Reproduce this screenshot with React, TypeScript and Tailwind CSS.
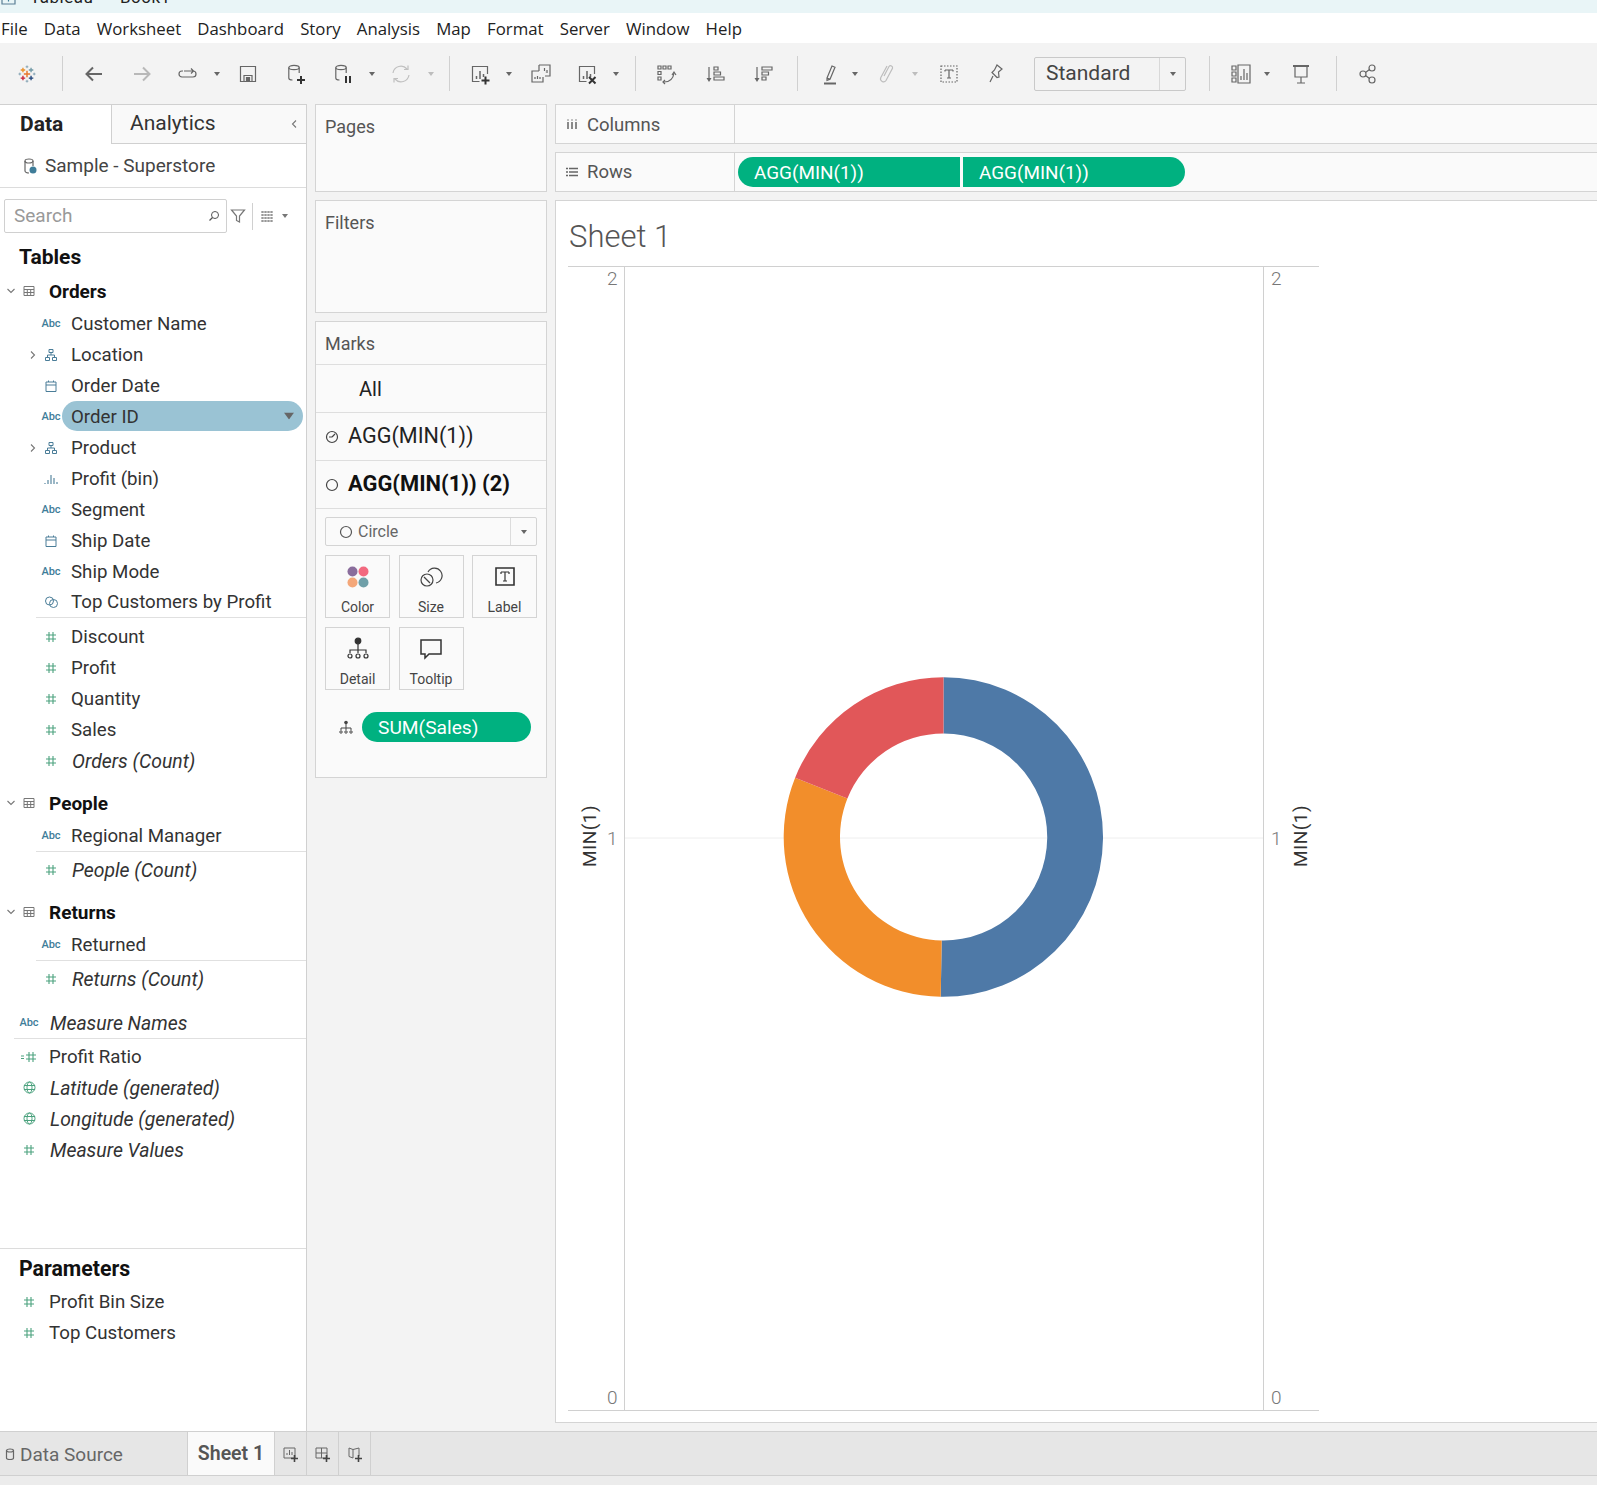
import React from "react";

const S = ({ children, w = 24, h = 24, className = "" }: { children: React.ReactNode; w?: number; h?: number; className?: string }) => (
  <svg width={w} height={h} viewBox={`0 0 ${w} ${h}`} fill="none" stroke="currentColor" strokeWidth="1.2" className={"shrink-0 " + className}>
    {children}
  </svg>
);

const Caret = ({ className = "" }: { className?: string }) => (
  <svg width="6" height="4" viewBox="0 0 6 4" className={"shrink-0 " + className}><path d="M0 0h6L3 4z" fill="currentColor" /></svg>
);

const Plus = ({ x, y }: { x: number; y: number }) => (
  <path d={`M${x - 4} ${y}h8M${x} ${y - 4}v8`} strokeWidth="2" stroke="#333" />
);

const Cyl = () => (
  <>
    <ellipse cx="10" cy="5.5" rx="5.2" ry="2.2" />
    <path d="M4.8 5.5V16c0 1.300 1.500 2 3.700 2M15.200 5.500V11" />
  </>
);

const Chart = () => (
  <>
    <path d="M19.500 12V4.500h-15v15h7" />
    <path d="M8.500 17v-3M12 17V9M15.500 15v-3" strokeWidth="1.500" />
  </>
);

const Logo = () => (
  <svg width="18" height="18" viewBox="0 0 20 20" strokeWidth="1.500" className="shrink-0">
    <path d="M10 6.500v7M6.500 10h7" stroke="#e8762b" strokeWidth="1.600" />
    <path d="M5.500 3v5M3 5.500h5" stroke="#eb912b" />
    <path d="M14.500 3v5M12 5.500h5" stroke="#7099a6" />
    <path d="M5.500 12v5M3 14.500h5" stroke="#c72037" />
    <path d="M14.500 12v5M12 14.500h5" stroke="#1f447a" />
    <path d="M10 .5v3M8.500 2h3M10 16.500v3M8.500 18h3M2 8.500v3M.5 10h3M18 8.500v3M16.500 10h3" stroke="#7f9fb0" strokeWidth="1" />
  </svg>
);

const Slot = ({ className, children }: { className: string; children?: React.ReactNode }) => (
  <div className={"flex items-center justify-center shrink-0 h-full " + className}>{children}</div>
);

const Sep = ({ className }: { className: string }) => (
  <Slot className={className}><div className="w-px h-[35px] bg-[#d0d0d0]" /></Slot>
);

const Toolbar = () => (
  <div className="h-[61px] bg-[#f3f3f3] flex items-center text-[#666] shrink-0">
    <Slot className="w-[53px]"><Logo /></Slot>
    <Sep className="w-[18px]" />
    <Slot className="w-[46px]"><S><path d="M5 12h15M11 5.500L4.500 12l6.500 6.500" strokeWidth="2" /></S></Slot>
    <Slot className="w-[50px] text-[#b8b8b8]"><S><path d="M4 12h15M13 5.500l6.500 6.500-6.500 6.500" strokeWidth="2" /></S></Slot>
    <Slot className="w-[42px]"><S><path d="M8 9h9a3 3 0 0 1 0 6H6a3 3 0 0 1 0-6h1M15 6.500L17.500 9 15 11.500" /></S></Slot>
    <Slot className="w-[16px]"><Caret /></Slot>
    <Slot className="w-[46px]"><S><path d="M4.500 4.500h15v15h-15zM8 19.500v-6h8v6" /><path d="M10.500 15.500h3v4h-3z" fill="currentColor" /></S></Slot>
    <Slot className="w-[50px]"><S><Cyl /><Plus x={17} y={18} /></S></Slot>
    <Slot className="w-[44px]"><S><Cyl /><path d="M15 14v7M19 14v7" strokeWidth="2" stroke="#333" /></S></Slot>
    <Slot className="w-[14px]"><Caret /></Slot>
    <Slot className="w-[44px] text-[#c0c0c0]"><S><path d="M4 11a8 8 0 0 1 14-4M20 13a8 8 0 0 1-14 4M15 7.500h4v-4M9 16.500H5v4" /></S></Slot>
    <Slot className="w-[16px] text-[#bdbdbd]"><Caret /></Slot>
    <Sep className="w-[20px]" />
    <Slot className="w-[42px]"><S><Chart /><Plus x={17.500} y={18.500} /></S></Slot>
    <Slot className="w-[16px]"><Caret /></Slot>
    <Slot className="w-[48px]"><S><path d="M10 3h11v11h-5M10 14V3M13 11V9M15.500 11V6M18 11V8" /><path d="M3 9h13v11H3z" fill="#f3f3f3" stroke="none" /><path d="M10 9H3v11h11v-5M6 17v-2M8.500 17v-3M11 17v-2" /></S></Slot>
    <Slot className="w-[44px]"><S><Chart /><path d="M14 15l6.500 6.500M20.500 15L14 21.500" strokeWidth="2" stroke="#333" /></S></Slot>
    <Slot className="w-[14px]"><Caret /></Slot>
    <Sep className="w-[24px]" />
    <Slot className="w-[38px]"><S><path d="M4 4h3v3H4zM9 4h3v3H9zM14 4h3v3h-3zM4 9.500h3v3H4zM4 15h3v3H4zM10 20c5 0 9-2 10-9" /><path d="M18 13l2-3 2 3M11 18l-2 2 2 2" /></S></Slot>
    <Slot className="w-[60px]"><S><path d="M6 5v13" strokeWidth="1.200" /><path d="M3.500 16h5L6 20z" fill="currentColor" stroke="none" /><path d="M11 5h4v3h-4zM11 10h6.500v3H11zM11 15h10v3H11z" /></S></Slot>
    <Slot className="w-[36px]"><S><path d="M6 5v13" strokeWidth="1.200" /><path d="M3.500 16h5L6 20z" fill="currentColor" stroke="none" /><path d="M11 5h10v3H11zM11 10h6.500v3H11zM11 15h4v3h-4z" /></S></Slot>
    <Sep className="w-[32px]" />
    <Slot className="w-[34px]"><S><path d="M9 16l5-12 3 1.300-5 12-3 1zM9 16l3 1.300" /><path d="M6 21.500h12" strokeWidth="2" /></S></Slot>
    <Slot className="w-[16px]"><Caret /></Slot>
    <Slot className="w-[48px] text-[#bdbdbd]"><S><path d="M9 15l5-9.500a2 2 0 0 1 3.500 1.800L11 19.500a3 3 0 0 1-5.300-2.700L12 5" transform="translate(0 -1)" /></S></Slot>
    <Slot className="w-[8px] text-[#bdbdbd]"><Caret /></Slot>
    <Slot className="w-[60px]"><S><path d="M4 4h16v16H4z" strokeDasharray="1.500 1.500" /><path d="M8 8h8M12 8v8M10 16h4M8 8v1.500M16 8v1.500" /></S></Slot>
    <Slot className="w-[32px]"><S><path d="M14 3l5 4-3.500 3 .5 5-2 .5-5-5 2.500-2.500zM10 14l-3 6" /></S></Slot>
    <div className="ml-[23px] w-[152px] h-[34px] border border-[#c9c9c9] rounded-[2px] flex items-center shrink-0">
      <div className="flex-1 pl-[11px] text-[21px] text-[#444] leading-none">Standard</div>
      <div className="w-[26px] h-full border-l border-[#d8d8d8] flex items-center justify-center"><Caret /></div>
    </div>
    <Sep className="ml-[7px] w-[32px]" />
    <Slot className="w-[32px]"><S><path d="M3 4h4v4H3zM3 10h4v4H3zM3 16h4v4H3zM9 3h12v18H9z" /><path d="M12 18v-4M15 18V7M18 18v-7" /></S></Slot>
    <Slot className="w-[20px]"><Caret /></Slot>
    <Slot className="w-[48px]"><S><path d="M4 4h16" strokeWidth="2" /><path d="M6 4v11h12V4M12 15v6M8 21h8" /></S></Slot>
    <Sep className="w-[22px]" />
    <Slot className="w-[42px]"><S><circle cx="16" cy="6" r="3" /><circle cx="7" cy="12" r="3" /><circle cx="16" cy="18" r="3" /><path d="M9.500 10.500L13.500 7.500M9.500 13.500l4 3" /></S></Slot>
  </div>
);

const blue = "text-[#4a7d98]";
const green = "text-[#4ba27e]";

const Abc = () => <span className="text-[11px] font-medium text-[#3f7d99] leading-none">Abc</span>;
const Hier = () => (
  <S w={14} h={14} className={blue}><path d="M5 1.500h4v3H5zM1.500 9.500h4v3h-4zM8.500 9.500h4v3h-4zM7 4.500V7M3.500 9.500V7h7v2.500" strokeWidth="1" /></S>
);
const Cal = () => (
  <S w={14} h={14} className={blue}><path d="M2 3h10v9.500H2zM2 6h10M4.500 1.500V3M9.500 1.500V3" strokeWidth="1" /></S>
);
const Bins = () => (
  <S w={16} h={14} className={blue}><path d="M2 11v1M5 8v4M8 3v9M11 6v6M14 10v2" strokeWidth="1.100" /></S>
);
const Hash = () => (
  <S w={12} h={14} className={green}><path d="M4 2v10M8 2v10M1 5h10M1 9h10" strokeWidth="1.100" /></S>
);
const SetIco = () => (
  <S w={15} h={14} className={blue}><circle cx="5.500" cy="6" r="4" strokeWidth="1" /><circle cx="9.500" cy="8.500" r="4" strokeWidth="1" /></S>
);
const HashCalc = () => (
  <S w={16} h={14} className={green}><path d="M8 2v10M12 2v10M5 5h10M5 9h10M0 6h3M0 8.500h3" strokeWidth="1.100" /></S>
);
const Globe = () => (
  <S w={13} h={13} className={green}><circle cx="6.500" cy="6.500" r="5.500" strokeWidth="1" /><ellipse cx="6.500" cy="6.500" rx="2.500" ry="5.500" strokeWidth="1" /><path d="M1 4.500h11M1 8.500h11" strokeWidth="1" /></S>
);
const Chev = ({ dir = "right" }: { dir?: "down" | "right" | "left" }) => (
  <S w={10} h={10} className="text-[#777]"><path d={dir === "down" ? "M1.500 3l3.500 3.500L8.500 3" : dir === "right" ? "M3 1.500L6.500 5 3 8.500" : "M7 1.500L3.500 5 7 8.500"} strokeWidth="1.100" /></S>
);

const Field = ({ icon, label, italic, top, chev, active }: { icon: React.ReactNode; label: string; italic?: boolean; top?: boolean; chev?: boolean; active?: boolean }) => (
  <div className="h-[31px] flex items-center text-[18.700px] text-[#333] shrink-0">
    {top ? <div className="w-[18px]" /> : <div className="w-[40px] flex justify-end pr-[2px]">{chev && <Chev />}</div>}
    <div className="w-[22px] flex justify-center items-center">{icon}</div>
    <div className={"flex-1 h-[30px] flex items-center pl-[9px] mr-[3px] rounded-full " + (active ? "bg-[#9ac3d4] justify-between pr-[11px] -mt-[1px]" : "")}>
      <span className={(italic ? "italic text-[19.400px] ml-[1px] " : "") + (active ? "mt-[3px]" : "mt-[2px]")}>{label}</span>
      {active && <Caret className="text-[#666] scale-[1.700]" />}
    </div>
  </div>
);

const TableHead = ({ label }: { label: string }) => (
  <div className="h-[30px] flex items-center text-[19px] font-bold text-[#111] shrink-0">
    <div className="w-[22px] flex justify-center"><Chev dir="down" /></div>
    <S w={14} h={14} className="text-[#777]"><path d="M2 2.500h10v9H2zM2 5.500h10M2 8.500h10M5.300 5.500v6M8.700 5.500v6" strokeWidth="1" /></S>
    <span className="ml-[13px] mt-[2px]">{label}</span>
  </div>
);

const Line = ({ className }: { className: string }) => <div className={"h-px bg-[#e0e0e0] shrink-0 " + className} />;

const LeftPanel = () => (
  <div className="w-[307px] shrink-0 bg-white border-r border-[#d0d0d0] flex flex-col">
    <div className="h-[40px] flex shrink-0">
      <div className="w-[112px] border-r border-[#d0d0d0] border-t pl-[20px] flex items-center text-[21px] font-bold text-[#222]">Data</div>
      <div className="flex-1 bg-[#f9f9f9] border-t border-b border-[#d0d0d0] pl-[18px] pr-[7px] flex items-center justify-between text-[21px] text-[#333]">
        <span>Analytics</span>
        <Chev dir="left" />
      </div>
    </div>
    <div className="h-[44px] border-b border-[#dcdcdc] flex items-center pl-[23px] text-[19px] text-[#444] shrink-0">
      <S w={14} h={18}><ellipse cx="6" cy="4" rx="4" ry="2" stroke="#666" /><path d="M2 4v10c0 1 2 2 4 2M10 4v5" stroke="#666" /><circle cx="10" cy="13" r="3.500" fill="#3f7d99" stroke="none" /></S>
      <span className="ml-[8px] mt-[2px]">Sample - Superstore</span>
    </div>
    <div className="mt-[11px] h-[34px] flex items-center shrink-0 pl-[4px] text-[#777]">
      <div className="w-[223px] h-full border border-[#d0d0d0] rounded-[2px] flex items-center justify-between pl-[9px] pr-[6px] text-[19px] text-[#999]">
        <span>Search</span>
        <S w={12} h={12} className="text-[#555]"><circle cx="7" cy="5" r="3.500" strokeWidth="1" /><path d="M4.500 7.500L1.500 10.500" strokeWidth="1.300" /></S>
      </div>
      <S w={16} h={16} className="ml-[3px]"><path d="M1.500 2h13L9.500 8v6l-3-1.500V8z" /></S>
      <div className="w-px h-[27px] bg-[#d0d0d0] ml-[6px]" />
      <S w={14} h={12} className="ml-[7px]"><path d="M1 2h12M1 5h12M1 8h12M1 11h12M3 1v11M6 1v11M9 1v11M12 1v11" strokeWidth="1" strokeDasharray="2 1" /></S>
      <Caret className="ml-[8px]" />
    </div>
    <div className="mt-[8px] h-[32px] pt-[2px] pl-[19px] flex items-center text-[21px] font-bold text-[#111] shrink-0">Tables</div>
    <div className="mt-[3px]"><TableHead label="Orders" /></div>
    <div className="h-[2px] shrink-0" />
    <Field icon={<Abc />} label="Customer Name" />
    <Field icon={<Hier />} label="Location" chev />
    <Field icon={<Cal />} label="Order Date" />
    <Field icon={<Abc />} label="Order ID" active />
    <Field icon={<Hier />} label="Product" chev />
    <Field icon={<Bins />} label="Profit (bin)" />
    <Field icon={<Abc />} label="Segment" />
    <Field icon={<Cal />} label="Ship Date" />
    <Field icon={<Abc />} label="Ship Mode" />
    <div className="-mt-[1px]"><Field icon={<SetIco />} label="Top Customers by Profit" /></div>
    <Line className="ml-[36px]" />
    <div className="h-[3px] shrink-0" />
    <Field icon={<Hash />} label="Discount" />
    <Field icon={<Hash />} label="Profit" />
    <Field icon={<Hash />} label="Quantity" />
    <Field icon={<Hash />} label="Sales" />
    <Field icon={<Hash />} label="Orders (Count)" italic />
    <div className="mt-[12px]"><TableHead label="People" /></div>
    <div className="h-[2px] shrink-0" />
    <Field icon={<Abc />} label="Regional Manager" />
    <Line className="ml-[36px]" />
    <div className="h-[2px] shrink-0" />
    <Field icon={<Hash />} label="People (Count)" italic />
    <div className="mt-[12px]"><TableHead label="Returns" /></div>
    <div className="h-[2px] shrink-0" />
    <Field icon={<Abc />} label="Returned" />
    <Line className="ml-[36px]" />
    <div className="h-[2px] shrink-0" />
    <Field icon={<Hash />} label="Returns (Count)" italic />
    <div className="mt-[13px]"><Field top icon={<Abc />} label="Measure Names" italic /></div>
    <Line className="ml-[14px]" />
    <div className="h-[2px] shrink-0" />
    <Field top icon={<HashCalc />} label="Profit Ratio" />
    <Field top icon={<Globe />} label="Latitude (generated)" italic />
    <Field top icon={<Globe />} label="Longitude (generated)" italic />
    <Field top icon={<Hash />} label="Measure Values" italic />
    <div className="flex-1" />
    <div className="h-[183px] border-t border-[#dcdcdc] shrink-0">
      <div className="h-[37px] pt-[2px] pl-[19px] flex items-center text-[21.300px] font-bold text-[#111]">Parameters</div>
      <Field top icon={<Hash />} label="Profit Bin Size" />
      <Field top icon={<Hash />} label="Top Customers" />
    </div>
  </div>
);

const Card = ({ label, icon }: { label: string; icon: React.ReactNode }) => (
  <div className="w-[65px] h-[63px] border border-[#d4d4d4] flex flex-col items-center text-[14px] text-[#444] shrink-0">
    <div className="h-[42px] flex items-center justify-center w-full">{icon}</div>
    <div className="leading-none mt-[2px]">{label}</div>
  </div>
);

const MarkRow = ({ children }: { children: React.ReactNode }) => (
  <div className="h-[48px] border-b border-[#dedede] flex items-center text-[21.600px] text-[#222] shrink-0">{children}</div>
);

const Middle = () => (
  <div className="w-[232px] ml-[8px] shrink-0 flex flex-col">
    <div className="h-[88px] bg-[#fafafa] border border-[#d4d4d4] pl-[9px] pt-[8px] text-[18px] text-[#555] shrink-0">Pages</div>
    <div className="h-[113px] mt-[8px] bg-[#fafafa] border border-[#d4d4d4] pl-[9px] pt-[8px] text-[18px] text-[#555] shrink-0">Filters</div>
    <div className="h-[457px] mt-[8px] bg-[#fafafa] border border-[#d4d4d4] flex flex-col shrink-0">
      <div className="h-[43px] border-b border-[#dedede] pl-[9px] flex items-center text-[18px] text-[#555] shrink-0">Marks</div>
      <MarkRow><span className="ml-[43px] text-[20px]">All</span></MarkRow>
      <MarkRow>
        <S w={14} h={14} className="ml-[9px] text-[#444]"><circle cx="7" cy="7" r="5.500" /><path d="M7 7l3-3M7 7H4" /></S>
        <span className="ml-[9px]">AGG(MIN(1))</span>
      </MarkRow>
      <MarkRow>
        <S w={14} h={14} className="ml-[9px] text-[#444]"><circle cx="7" cy="7" r="5.500" /></S>
        <span className="ml-[9px] font-bold text-[21.900px] text-[#111]">AGG(MIN(1)) (2)</span>
      </MarkRow>
      <div className="mt-[8px] ml-[9px] w-[212px] h-[29px] border border-[#d4d4d4] rounded-[2px] flex items-center shrink-0 text-[16px] text-[#666]">
        <S w={14} h={14} className="ml-[13px] text-[#555]"><circle cx="7" cy="7" r="5.500" /></S>
        <span className="ml-[5px] flex-1">Circle</span>
        <div className="w-[26px] h-full border-l border-[#dcdcdc] flex items-center justify-center"><Caret className="text-[#666]" /></div>
      </div>
      <div className="mt-[9px] ml-[9px] flex gap-[8.500px] shrink-0">
        <Card label="Color" icon={
          <svg width="24" height="24" viewBox="0 0 24 24" className="shrink-0">
            <circle cx="6.500" cy="6.500" r="5" fill="#8a6d9c" />
            <circle cx="17.500" cy="6.500" r="5" fill="#f2697f" />
            <circle cx="6.500" cy="17.500" r="5" fill="#f4a779" />
            <circle cx="17.500" cy="17.500" r="5" fill="#6f9fa8" />
          </svg>} />
        <Card label="Size" icon={<S className="text-[#444]"><path d="M9 7a7.500 7.500 0 1 1 8 11" /><circle cx="8" cy="15" r="6" /><path d="M5 12l6 6" /></S>} />
        <Card label="Label" icon={<S className="text-[#333]"><path d="M3 3h18v17H3z" strokeWidth="1.600" /><path d="M8 7h8M12 7v9M10 16h4M8 7v2M16 7v2" /></S>} />
      </div>
      <div className="mt-[9px] ml-[9px] flex gap-[8.500px] shrink-0">
        <Card label="Detail" icon={<S className="text-[#333]"><circle cx="12" cy="4" r="2.800" fill="currentColor" /><path d="M12 7v6M4 16v-3h16v3M12 13v3" /><circle cx="4" cy="19" r="2" /><circle cx="12" cy="19" r="2" /><circle cx="20" cy="19" r="2" /></S>} />
        <Card label="Tooltip" icon={<S className="text-[#333]"><path d="M2 3h20v14H10l-4 4v-4H2z" strokeWidth="1.500" /></S>} />
      </div>
      <div className="mt-[22px] flex items-center shrink-0">
        <S w={14} h={14} className="ml-[23px] text-[#444]"><circle cx="7" cy="2.500" r="1.800" fill="currentColor" stroke="none" /><path d="M7 4v4M2 10V8h10v2M7 8v2" strokeWidth="1" /><circle cx="2" cy="12" r="1.200" strokeWidth="1" /><circle cx="7" cy="12" r="1.200" strokeWidth="1" /><circle cx="12" cy="12" r="1.200" strokeWidth="1" /></S>
        <div className="ml-[9px] w-[169px] h-[30px] pt-[2px] rounded-full bg-[#00b180] text-white text-[19.200px] flex items-center pl-[16px]">SUM(Sales)</div>
      </div>
    </div>
  </div>
);

const pt = (r: number, a: number) => {
  const t = (a * Math.PI) / 180;
  return `${(318.5 + r * Math.sin(t)).toFixed(2)} ${(570 - r * Math.cos(t)).toFixed(2)}`;
};
const slice = (a0: number, a1: number) => {
  const R = 159.8;
  const r = 103.5;
  const large = a1 - a0 > 180 ? 1 : 0;
  return `M${pt(R, a0)}A${R} ${R} 0 ${large} 1 ${pt(R, a1)}L${pt(r, a1)}A${r} ${r} 0 ${large} 0 ${pt(r, a0)}Z`;
};

const Nums = ({ className }: { className: string }) => (
  <div className={"flex flex-col justify-between text-[19px] font-light leading-[24px] text-[#777] shrink-0 " + className}>
    <span>2</span>
    <span>1</span>
    <span>0</span>
  </div>
);

const AxisLabel = ({ className }: { className: string }) => (
  <div className={"flex items-center justify-center shrink-0 " + className}>
    <span className="[writing-mode:vertical-rl] rotate-180 text-[19px] tracking-[0.5px] text-[#333] leading-none -mt-[4px]">MIN(1)</span>
  </div>
);

const Shelf = ({ icon, label, children, tall }: { icon: React.ReactNode; label: string; children?: React.ReactNode; tall?: boolean }) => (
  <div className="h-[40px] bg-[#fafafa] border-y border-l border-[#d4d4d4] flex items-center shrink-0">
    <div className="w-[179px] h-full border-r border-[#d4d4d4] flex items-center pl-[9px] text-[18.500px] text-[#555] shrink-0">
      <span className="w-[13px] flex justify-center text-[#666]">{icon}</span>
      <span className={"ml-[9px] " + (tall ? "mt-[3px]" : "mt-[2px]")}>{label}</span>
    </div>
    {children}
  </div>
);

const Right = () => (
  <div className="flex-1 ml-[8px] flex flex-col min-w-0">
    <Shelf tall label="Columns" icon={<S w={12} h={12}><path d="M2 4v7M6 4v7M10 4v7" strokeWidth="1.500" /><path d="M2 1.500v1M6 1.500v1M10 1.500v1" strokeWidth="1.500" /></S>} />
    <div className="h-[8px] shrink-0" />
    <Shelf label="Rows" icon={<S w={12} h={12}><path d="M3 2.500h9M3 6h9M3 9.500h9M0 2.500h2M0 6h2M0 9.500h2" strokeWidth="1.500" /></S>}>
      <div className="ml-[3px] w-[222px] h-[30px] pt-[2px] rounded-l-full bg-[#00b180] text-white text-[18.900px] flex items-center pl-[16px]">AGG(MIN(1))</div>
      <div className="ml-[3px] w-[222px] h-[30px] pt-[2px] rounded-r-full bg-[#00b180] text-white text-[18.900px] flex items-center pl-[16px]">AGG(MIN(1))</div>
    </Shelf>
    <div className="h-[8px] shrink-0" />
    <div className="flex-1 mb-[8px] bg-white border-y border-l border-[#d4d4d4] flex flex-col min-h-0">
      <div className="h-[65px] pt-[7px] pl-[13px] flex items-center text-[31px] font-light text-[#555] shrink-0">Sheet 1</div>
      <div className="flex-1 mb-[11px] ml-[12px] w-[751px] border-y border-[#d0d0d0] flex min-h-0">
        <AxisLabel className="ml-[3px] w-[36px]" />
        <Nums className="w-[17px] pr-[7px] text-right" />
        <div className="w-[640px] shrink-0 border-x border-[#d0d0d0] min-w-0">
          <svg className="block w-full h-full" viewBox="0 0 638 1143">
            <path d="M0 571H638" stroke="#eeeeee" />
            <path d={slice(0, 181)} fill="#4e79a7" />
            <path d={slice(181, 291.8)} fill="#f28e2b" />
            <path d={slice(291.8, 360)} fill="#e15759" />
          </svg>
        </div>
        <Nums className="w-[24px] pl-[7px]" />
        <AxisLabel className="w-[25px]" />
      </div>
    </div>
  </div>
);

const TabIcon = ({ children }: { children: React.ReactNode }) => (
  <div className="w-[32px] h-full border-r border-[#d0d0d0] flex items-center justify-center text-[#666] shrink-0">
    <S w={16} h={16}>{children}</S>
  </div>
);

export default function App() {
  return (
    <div className="w-[1597px] h-[1485px] overflow-hidden flex flex-col bg-[#f3f3f3] font-['Roboto',sans-serif]">
      <div className="h-[13px] bg-[#e9f5f7] overflow-hidden flex shrink-0 text-[17px] text-[#222]">
        <S w={16} h={16} className="-mt-[10px] ml-[1px] text-[#5b7f95]"><path d="M1 1h13v13H1z" /><path d="M5 9h5M7.500 6.500v5" stroke="#3f7d99" /></S>
        <span className="ml-[13px] -mt-[13px] leading-[20px] [word-spacing:6px] tracking-[0.5px]">Tableau - Book1</span>
      </div>
      <div className="h-[30px] pt-[1px] bg-white flex items-center text-[16.800px] text-[#222] shrink-0 font-['Open_Sans',sans-serif]">
        <div className="flex gap-[16.200px] pl-[1px]">
          {["File", "Data", "Worksheet", "Dashboard", "Story", "Analysis", "Map", "Format", "Server", "Window", "Help"].map((m) => (
            <span key={m}>{m}</span>
          ))}
        </div>
      </div>
      <Toolbar />
      <div className="flex-1 flex min-h-0">
        <LeftPanel />
        <Middle />
        <Right />
      </div>
      <div className="h-[45px] bg-[#e6e6e6] border-y border-[#d0d0d0] flex items-center shrink-0">
        <div className="w-[187px] h-full flex items-center pl-[5px] text-[19px] text-[#666] shrink-0">
          <S w={10} h={14}><ellipse cx="5" cy="3.500" rx="3.500" ry="1.500" /><path d="M1.500 3.500V11c0 1 1.500 1.500 3.500 1.500s3.500-.5 3.500-1.500V3.500" /></S>
          <span className="ml-[5px] mt-[4px]">Data Source</span>
        </div>
        <div className="w-[88px] h-full bg-[#fafafa] border-x border-[#d0d0d0] flex items-center justify-center text-[19.500px] font-semibold text-[#555] shrink-0">Sheet 1</div>
        <TabIcon><path d="M1 2h11v10H1z" strokeWidth="1" /><path d="M4 9V7M6.500 9V4M9 9V6" strokeWidth="1" /><path d="M8 12.500h7M11.500 9v7" strokeWidth="1.600" stroke="#444" /></TabIcon>
        <TabIcon><path d="M1 2h11v10H1zM6.500 2v10M1 7h11" strokeWidth="1" /><path d="M8 12.500h7M11.500 9v7" strokeWidth="1.600" stroke="#444" /></TabIcon>
        <TabIcon><path d="M2 2l4 1.500V12l-4-1.500zM6 3.500l6-1.500v8" strokeWidth="1" /><path d="M8 12.500h7M11.500 9v7" strokeWidth="1.600" stroke="#444" /></TabIcon>
      </div>
      <div className="h-[9px] bg-[#ececec] shrink-0" />
    </div>
  );
}
